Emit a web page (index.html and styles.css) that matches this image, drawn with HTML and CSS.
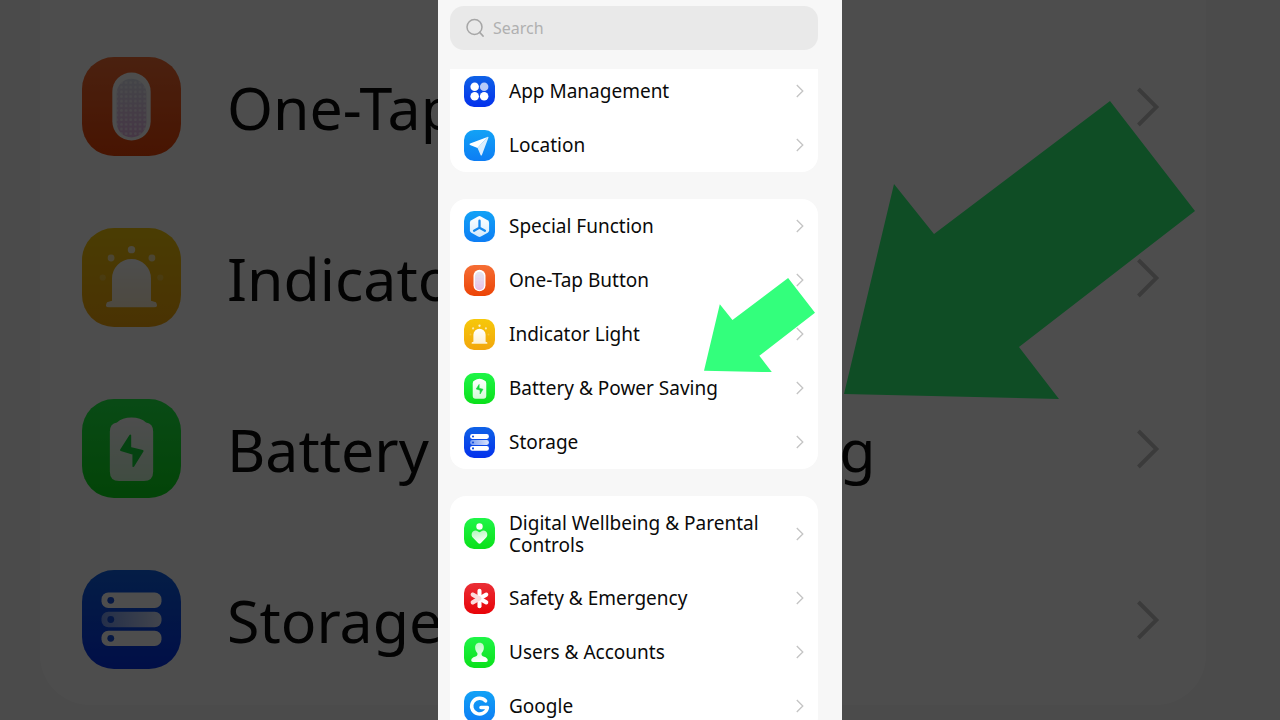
FILE: index.html
```html
<!DOCTYPE html>
<html lang="en">
<head>
    <meta charset="UTF-8">
    <meta name="viewport" content="width=device-width, initial-scale=1.0">
    <title>Settings</title>
    <link rel="stylesheet" href="styles.css">
</head>
<body>
    <!-- Shared icons -->
    <svg class="sprite" aria-hidden="true">
        <defs>
            <linearGradient id="fade" x1="0" y1="0" x2="0" y2="1">
                <stop offset="0" stop-color="#fff"/>
                <stop offset="1" stop-color="#fff" stop-opacity="0.82"/>
            </linearGradient>
            <linearGradient id="fadeUp" x1="0" y1="0" x2="0.3" y2="1">
                <stop offset="0" stop-color="#fff" stop-opacity="0.65"/>
                <stop offset="1" stop-color="#fff"/>
            </linearGradient>
            <linearGradient id="fadeSide" x1="0" y1="0" x2="1" y2="0">
                <stop offset="0" stop-color="#fff" stop-opacity="0.45"/>
                <stop offset="1" stop-color="#fff" stop-opacity="0.85"/>
            </linearGradient>
            <linearGradient id="pink" x1="0" y1="0" x2="0" y2="1">
                <stop offset="0" stop-color="#dfe2ee"/>
                <stop offset="1" stop-color="#e6b4e4"/>
            </linearGradient>
            <pattern id="dots" width="1.500" height="1.500" patternUnits="userSpaceOnUse">
                <circle cx="0.750" cy="0.750" r="0.450" fill="#fff"/>
            </pattern>
        </defs>
        <symbol id="chevron" viewBox="0 0 8 14">
            <path d="M0.800 1l6 6-6 6" fill="none" stroke="currentColor" stroke-width="1.300"/>
        </symbol>
        <symbol id="apps" viewBox="0 0 32 32">
            <g fill="#fff">
                <circle cx="11" cy="11.2" r="4.4"/>
                <circle cx="20.8" cy="11.2" r="4.4" opacity="0.7"/>
                <circle cx="11" cy="20.9" r="4.4"/>
                <circle cx="20.8" cy="20.9" r="4.4"/>
            </g>
        </symbol>
        <symbol id="location" viewBox="0 0 32 32">
            <path d="M24.2 7.1L6.3 14c-.8.3-.8 1.1-.1 1.4l7.8 3.1z" fill="#fff"/>
            <path d="M24.2 7.1c.8-.3 1.2.1 1 .8l-6.7 17.8c-.3.8-1.1.8-1.4 0L14 18.5z" fill="#fff" opacity="0.85"/>
        </symbol>
        <symbol id="special" viewBox="0 0 32 32">
            <path d="M14.5 5.6q1.5-.8 3 0l6.9 3.9q1.5.9 1.5 2.6v7.8q0 1.7-1.5 2.6l-6.9 3.9q-1.5.8-3 0l-6.9-3.9q-1.5-.9-1.5-2.6v-7.8q0-1.7 1.5-2.6z" fill="url(#fade)"/>
            <path d="M16 10v7.2l-5.6 3.2M16 17.2l5.6 3.2" fill="none" stroke="#1689ee" stroke-width="2.4" stroke-linecap="round"/>
        </symbol>
        <symbol id="onetap" viewBox="0 0 32 32">
            <rect x="9.8" y="5" width="12.4" height="22" rx="6.2" fill="#fff"/>
            <rect x="11.2" y="7" width="9.6" height="19" rx="4.8" fill="url(#pink)"/>
            <rect x="11.2" y="7" width="9.6" height="19" rx="4.8" fill="url(#dots)" opacity="0.6"/>
        </symbol>
        <symbol id="indicator" viewBox="0 0 32 32">
            <path d="M9.7 23.5V16.3a6.3 6.3 0 0 1 12.6 0v7.2l1.6.5q1 1.6-.6 1.6H8.7q-1.6 0-.6-1.6z" fill="url(#fade)"/>
            <g fill="#fff">
                <circle cx="16" cy="7" r="1.2" opacity="0.8"/>
                <circle cx="9.4" cy="9.7" r="1.1" opacity="0.65"/>
                <circle cx="22.6" cy="9.7" r="1.1" opacity="0.65"/>
                <circle cx="6.7" cy="16" r="1" opacity="0.2"/>
                <circle cx="25.3" cy="16" r="1" opacity="0.2"/>
            </g>
        </symbol>
        <symbol id="battery" viewBox="0 0 32 32">
            <path d="M9 10.5q0-2.5 2.3-2.9Q13 6 16 6t4.7 1.6Q23 8 23 10.5v13q0 3-3 3h-8q-3 0-3-3z" fill="url(#fade)"/>
            <path d="M15.6 11.8v4l4 1-3 4.900v-4l-4-1.200z" fill="#12d93a" stroke="#12d93a" stroke-width="0.600" stroke-linejoin="round"/>
        </symbol>
        <symbol id="storage" viewBox="0 0 32 32">
            <rect x="6.3" y="7.3" width="19.4" height="5" rx="2.2" fill="#fff"/>
            <rect x="6.3" y="13.5" width="19.4" height="5" rx="2.2" fill="url(#fadeSide)"/>
            <rect x="6.3" y="19.6" width="19.4" height="5" rx="2.2" fill="#fff"/>
            <g fill="#1550dc">
                <circle cx="9.3" cy="9.8" r="1.1"/>
                <circle cx="9.3" cy="16" r="1.1"/>
                <circle cx="9.3" cy="22.1" r="1.1"/>
            </g>
        </symbol>
        <symbol id="wellbeing" viewBox="0 0 32 32">
            <circle cx="16" cy="8.8" r="3.3" fill="#fff"/>
            <path d="M16 26.500q-.8 0-1.500-.7l-5.200-5.300c-3.800-4 .8-10 5.200-6.500q1.500 1.200 3 0c4.400-3.500 9 2.500 5.200 6.500l-5.200 5.300Q16.800 26.500 16 26.500z" fill="url(#fadeUp)"/>
        </symbol>
        <symbol id="safety" viewBox="0 0 32 32">
            <g stroke="#fff" stroke-width="4.2" stroke-linecap="round">
                <path d="M16 8v16"/>
                <path d="M9 12l14 8"/>
                <path d="M23 12L9 20"/>
            </g>
            <path d="M16 16L9 20M16 16l-7-4" stroke="#f28a8a" stroke-opacity="0.3" stroke-width="4.2" stroke-linecap="round"/>
        </symbol>
        <symbol id="users" viewBox="0 0 32 32">
            <path d="M16 6c3.2 0 4.7 2.3 4.5 5.3-.1 2.6-1.3 4.2-2.3 5.2-.5 2.3.5 3.2 2.6 3.9 2.2.7 3.7 1.9 3.7 3.6 0 1.2-.7 1.7-1.9 1.7H9.4c-1.2 0-1.9-.5-1.9-1.7 0-1.7 1.5-2.9 3.7-3.6 2.1-.7 3.1-1.6 2.6-3.9-1-1-2.2-2.6-2.3-5.2C11.3 8.3 12.8 6 16 6z" fill="url(#fadeUp)"/>
        </symbol>
        <symbol id="google" viewBox="0 0 32 32">
            <path d="M22.3 10.2A8.2 8.2 0 1 0 24.2 17h-6.7" fill="none" stroke="#fff" stroke-width="3.6" stroke-linecap="round" stroke-linejoin="round"/>
        </symbol>
    </svg>

    <!-- Enlarged, dimmed copy of the list behind the phone -->
    <div class="backdrop" aria-hidden="true">
        <div class="backdrop-card">
            <div class="row">
                <svg class="icon orange"><use href="#onetap"/></svg>
                <span class="label">One-Tap Button</span>
                <svg class="chevron"><use href="#chevron"/></svg>
            </div>
            <div class="row">
                <svg class="icon yellow"><use href="#indicator"/></svg>
                <span class="label">Indicator Light</span>
                <svg class="chevron"><use href="#chevron"/></svg>
            </div>
            <div class="row">
                <svg class="icon green"><use href="#battery"/></svg>
                <span class="label">Battery &amp; Power Saving</span>
                <svg class="chevron"><use href="#chevron"/></svg>
            </div>
            <div class="row">
                <svg class="icon blue"><use href="#storage"/></svg>
                <span class="label">Storage</span>
                <svg class="chevron"><use href="#chevron"/></svg>
            </div>
            <svg class="arrow" viewBox="0 0 351 298">
                <path d="M0 293L50 83l40 50L266 0l85 110-176 136 40 52z"/>
            </svg>
        </div>
    </div>

    <main class="phone">
        <div class="search">
            <svg class="search-icon" viewBox="0 0 20 20" aria-hidden="true">
                <circle cx="9.5" cy="9" r="7.5" fill="none" stroke="currentColor" stroke-width="1.5"/>
                <path d="M14.8 14.5l3.2 3.5" stroke="currentColor" stroke-width="1.8" stroke-linecap="round"/>
            </svg>
            <input type="search" class="search-input" placeholder="Search" aria-label="Search">
        </div>

        <div class="list">
            <nav class="group scrolled">
                <a class="row" href="#">
                    <svg class="icon blue"><use href="#apps"/></svg>
                    <span class="label">App Management</span>
                    <svg class="chevron"><use href="#chevron"/></svg>
                </a>
                <a class="row" href="#">
                    <svg class="icon sky"><use href="#location"/></svg>
                    <span class="label">Location</span>
                    <svg class="chevron"><use href="#chevron"/></svg>
                </a>
            </nav>

            <nav class="group">
                <a class="row" href="#">
                    <svg class="icon sky"><use href="#special"/></svg>
                    <span class="label">Special Function</span>
                    <svg class="chevron"><use href="#chevron"/></svg>
                </a>
                <a class="row" href="#">
                    <svg class="icon orange"><use href="#onetap"/></svg>
                    <span class="label">One-Tap Button</span>
                    <svg class="chevron"><use href="#chevron"/></svg>
                </a>
                <a class="row" href="#">
                    <svg class="icon yellow"><use href="#indicator"/></svg>
                    <span class="label">Indicator Light</span>
                    <svg class="chevron"><use href="#chevron"/></svg>
                </a>
                <a class="row" href="#">
                    <svg class="icon green"><use href="#battery"/></svg>
                    <span class="label">Battery &amp; Power Saving</span>
                    <svg class="chevron"><use href="#chevron"/></svg>
                </a>
                <a class="row" href="#">
                    <svg class="icon blue"><use href="#storage"/></svg>
                    <span class="label">Storage</span>
                    <svg class="chevron"><use href="#chevron"/></svg>
                </a>
                <svg class="arrow" viewBox="0 0 351 298" aria-hidden="true">
                    <path d="M0 293L50 83l40 50L266 0l85 110-176 136 40 52z"/>
                </svg>
            </nav>

            <nav class="group">
                <a class="row tall" href="#">
                    <svg class="icon green"><use href="#wellbeing"/></svg>
                    <span class="label">Digital Wellbeing &amp; Parental Controls</span>
                    <svg class="chevron"><use href="#chevron"/></svg>
                </a>
                <a class="row" href="#">
                    <svg class="icon red"><use href="#safety"/></svg>
                    <span class="label">Safety &amp; Emergency</span>
                    <svg class="chevron"><use href="#chevron"/></svg>
                </a>
                <a class="row" href="#">
                    <svg class="icon green"><use href="#users"/></svg>
                    <span class="label">Users &amp; Accounts</span>
                    <svg class="chevron"><use href="#chevron"/></svg>
                </a>
                <a class="row" href="#">
                    <svg class="icon sky"><use href="#google"/></svg>
                    <span class="label">Google</span>
                    <svg class="chevron"><use href="#chevron"/></svg>
                </a>
            </nav>
        </div>
    </main>
</body>
</html>
```

FILE: styles.css
```css
* {
    margin: 0;
    padding: 0;
    box-sizing: border-box;
}

body {
    font-family: 'Noto Sans', 'Open Sans', sans-serif;
    background: #000;
    color: #0a0a0a;
    height: 100vh;
    overflow: hidden;
    position: relative;
    display: flex;
    justify-content: center;
}

.sprite {
    position: absolute;
    width: 0;
    height: 0;
}

/* Rows, shared by the phone and the backdrop */
.row {
    display: flex;
    align-items: center;
    gap: 14px;
    min-height: 54px;
    padding: 0 14px;
    color: inherit;
    text-decoration: none;
}

.row.tall {
    min-height: 75px;
}

.icon {
    flex: none;
    width: 31px;
    height: 31px;
    border-radius: 10px;
}

.label {
    flex: 1;
    font-size: 19px;
    line-height: 22px;
}

.chevron {
    flex: none;
    width: 8px;
    height: 14px;
    color: #c4c4c4;
}

.blue {
    background: linear-gradient(#0f62e6, #0431ec);
}

.sky {
    background: linear-gradient(#12a2f6, #0d7df4);
}

.orange {
    background: linear-gradient(#f56e35, #ec4406);
}

.yellow {
    background: linear-gradient(#f6c80a, #f2a60c);
}

.green {
    background: linear-gradient(#1ff548, #0be01a);
}

.red {
    background: linear-gradient(#ea2e36, #e80408);
}

.arrow {
    position: absolute;
    fill: #33ff7c;
}

/* Backdrop */
.backdrop {
    position: absolute;
    inset: 0;
    overflow: hidden;
    padding: 0 74px 0 40px;
    background: #f7f7f7;
    opacity: 0.3;
}

.backdrop-card {
    position: relative;
    padding-top: 21px;
    background: #fff;
    border-radius: 0 0 50px 50px;
}

.backdrop .row {
    gap: 46px;
    min-height: 171px;
    padding: 0 46px 0 42px;
}

.backdrop .icon {
    width: 99px;
    height: 99px;
    border-radius: 32px;
}

.backdrop .label {
    font-size: 59px;
    line-height: 70px;
    white-space: nowrap;
}

.backdrop .chevron {
    width: 24px;
    height: 42px;
}

.backdrop .arrow {
    top: 101px;
    right: 11px;
    width: 351px;
}

/* Phone */
.phone {
    position: relative;
    width: 100%;
    max-width: 404px;
    display: flex;
    flex-direction: column;
    gap: 19px;
    padding: 6px 24px 0 12px;
    background: #f7f7f7;
}

.search {
    display: flex;
    align-items: center;
    gap: 8px;
    min-height: 44px;
    padding: 0 15px;
    background: #e9e9e9;
    border-radius: 14px;
    color: #a6a6a6;
}

.search-icon {
    flex: none;
    width: 20px;
    height: 20px;
}

.search-input {
    flex: 1;
    min-width: 0;
    border: none;
    outline: none;
    background: none;
    font-family: inherit;
    font-size: 16px;
    color: #0a0a0a;
}

.search-input::placeholder {
    color: #b0b0b0;
}

.list {
    flex: 1;
    min-height: 0;
    overflow: hidden;
}

.group {
    position: relative;
    margin-bottom: 27px;
    background: #fff;
    border-radius: 16px;
}

/* Top of this group is under the search bar */
.group.scrolled {
    margin-top: -5px;
    border-radius: 0 0 16px 16px;
}

.group .arrow {
    top: 79px;
    right: 3px;
    width: 111px;
}
```
